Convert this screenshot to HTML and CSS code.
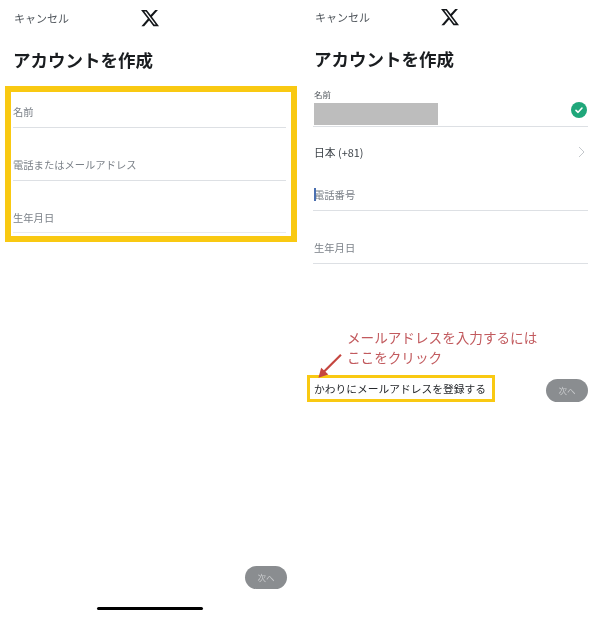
FILE: index.html
```html
<!DOCTYPE html>
<html lang="ja">
<head>
<meta charset="utf-8">
<title>アカウントを作成</title>
<link rel="stylesheet" href="styles.css">
</head>
<body>
<main class="screens">
  <section class="phone phone-left">
    <header class="topbar">
      <span class="cancel">キャンセル</span>
      <svg class="logo" viewBox="0 0 24 24"><path d="M18.24 2.25h3.31l-7.23 8.26 8.5 11.24h-6.66l-5.21-6.82-5.97 6.82H1.68l7.73-8.84L1.25 2.25h6.83l4.71 6.23zm-1.16 17.52h1.83L7.08 4.13H5.12z"/></svg>
    </header>
    <h1 class="title">アカウントを作成</h1>
    <div class="highlight-form">
      <div class="field first"><span class="placeholder">名前</span></div>
      <div class="field"><span class="placeholder">電話またはメールアドレス</span></div>
      <div class="field last"><span class="placeholder">生年月日</span></div>
    </div>
    <div class="next-row bottom"><button class="next">次へ</button></div>
    <div class="home-bar"></div>
  </section>

  <section class="phone phone-right">
    <header class="topbar">
      <span class="cancel">キャンセル</span>
      <svg class="logo" viewBox="0 0 24 24"><path d="M18.24 2.25h3.31l-7.23 8.26 8.5 11.24h-6.66l-5.21-6.82-5.97 6.82H1.68l7.73-8.84L1.25 2.25h6.83l4.71 6.23zm-1.16 17.52h1.83L7.08 4.13H5.12z"/></svg>
    </header>
    <h1 class="title">アカウントを作成</h1>
    <div class="form">
      <div class="name-field">
        <span class="small-label">名前</span>
        <div class="name-row">
          <div class="redacted"></div>
          <svg class="check" viewBox="0 0 16 16"><circle cx="8" cy="8" r="8" fill="#1fa77a"/><path d="M5 8.3l2.1 2L11 6" fill="none" stroke="#fff" stroke-width="1.6" stroke-linecap="round" stroke-linejoin="round"/></svg>
        </div>
      </div>
      <div class="country-row">
        <span class="country">日本 (+81)</span>
        <svg class="chevron" viewBox="0 0 7 12"><path d="M1 1l5 5-5 5" fill="none" stroke="#c4c8cc" stroke-width="1"/></svg>
      </div>
      <div class="field phone-field"><span class="caret"></span><span class="placeholder">電話番号</span></div>
      <div class="field"><span class="placeholder">生年月日</span></div>
    </div>
    <div class="annotation">
      <svg class="arrow" viewBox="0 0 30 28"><path d="M25.500 1.500L6 21" fill="none" stroke="#c5463f" stroke-width="2.400"/><path d="M0.500 27l3-11 8 7.500z" fill="#c5463f"/></svg>
      <p class="note">メールアドレスを入力するには<br>ここをクリック</p>
    </div>
    <div class="next-row">
      <span class="email-link">かわりにメールアドレスを登録する</span>
      <button class="next">次へ</button>
    </div>
  </section>
</main>
</body>
</html>
```

FILE: styles.css
```css
* { box-sizing: border-box; }
html, body { margin: 0; padding: 0; background: #fff; }
body {
  width: 600px;
  height: 617px;
  overflow: hidden;
  font-family: "Noto Sans CJK JP", "Noto Sans", sans-serif;
}
.screens { display: flex; height: 617px; filter: blur(0.35px); }
.phone { width: 300px; display: flex; flex-direction: column; height: 617px; }
.phone-left { padding: 0 13px 0 5px; }
.phone-right { padding: 0 12px 0 7px; }

.topbar { display: flex; align-items: center; height: 34px; padding-left: 9px; padding-top: 1px; }
.phone-right .topbar { padding-left: 8px; padding-top: 0; }
.cancel { font-size: 11px; line-height: 16px; color: #50565c; width: 126px; }
.phone-right .cancel { width: 125px; }
.logo { width: 20px; height: 20px; fill: #14171a; }

.title {
  margin: 13px 0 0 8px;
  font-size: 17.500px;
  line-height: 26px;
  font-weight: 700;
  color: #1a1d20;
  white-space: nowrap;
}
.phone-right .title { margin: 12px 0 0 7px; }

.highlight-form {
  margin-top: 13px;
  height: 156px;
  width: 292px;
  border: 6.500px solid #f9c912;
  padding: 0 5px 0 2px;
}
.field {
  height: 53px;
  border-bottom: 1px solid #dde0e4;
  display: flex;
  align-items: flex-end;
  padding-bottom: 8px;
}
.field.first { height: 36px; }
.field.last { height: 52px; padding-bottom: 7px; border-bottom-color: #e9ebee; }
.placeholder { font-size: 10.300px; line-height: 15px; color: #7b8188; white-space: nowrap; }

.form { margin: 16px 0 0 6px; width: 275px; }
.name-field { border-bottom: 1px solid #dde0e4; height: 39px; }
.small-label { display: block; font-size: 8.500px; line-height: 12px; color: #50565c; margin-left: 1px; }
.name-row { display: flex; justify-content: space-between; align-items: center; height: 22px; margin-top: 3px; }
.redacted { width: 124px; height: 22px; background: #bdbdbd; margin-left: 1px; }
.check { width: 16px; height: 16px; margin-right: 1px; margin-top: -8px; }
.country-row { display: flex; justify-content: space-between; align-items: center; height: 49px; margin-bottom: -18px; padding: 0 3px 0 1px; }
.country { font-size: 10.800px; line-height: 16px; color: #3d4349; }
.chevron { width: 7px; height: 12px; }
.form .field { padding-left: 1px; }
.phone-field { position: relative; }
.caret { position: absolute; left: 1px; bottom: 9px; width: 1.500px; height: 13px; background: #4a6fb0; }

.annotation { margin: 62px 0 0 0; height: 50px; position: relative; padding-left: 40px; }
.note { margin: 0; font-size: 13.600px; line-height: 20px; color: #c25a5e; white-space: nowrap; padding-top: 1px; }
.arrow { position: absolute; left: 11px; top: 27px; width: 27px; height: 26px; }

.next-row { display: flex; justify-content: space-between; align-items: center; }
.phone-right .next-row { width: 281px; margin-top: -1px; }
.phone-right .next { margin-top: 3px; }
.email-link {
  border: 3px solid #f9c912;
  height: 27px;
  width: 188px;
  padding-left: 4px;
  font-size: 10.750px;
  line-height: 21px;
  color: #26292d;
  white-space: nowrap;
}
.next {
  width: 42px;
  height: 23px;
  border: 0;
  border-radius: 12px;
  background: #8a8d90;
  color: #c9cbcd;
  font-family: inherit;
  font-size: 8.500px;
  line-height: 23px;
  padding: 0;
}
.bottom { justify-content: flex-end; margin-top: auto; }
.phone-left .bottom { width: 282px; }
.home-bar { width: 106px; height: 3px; margin: 18px 0 7px 92px; background: #000; border-radius: 2px; }
```
